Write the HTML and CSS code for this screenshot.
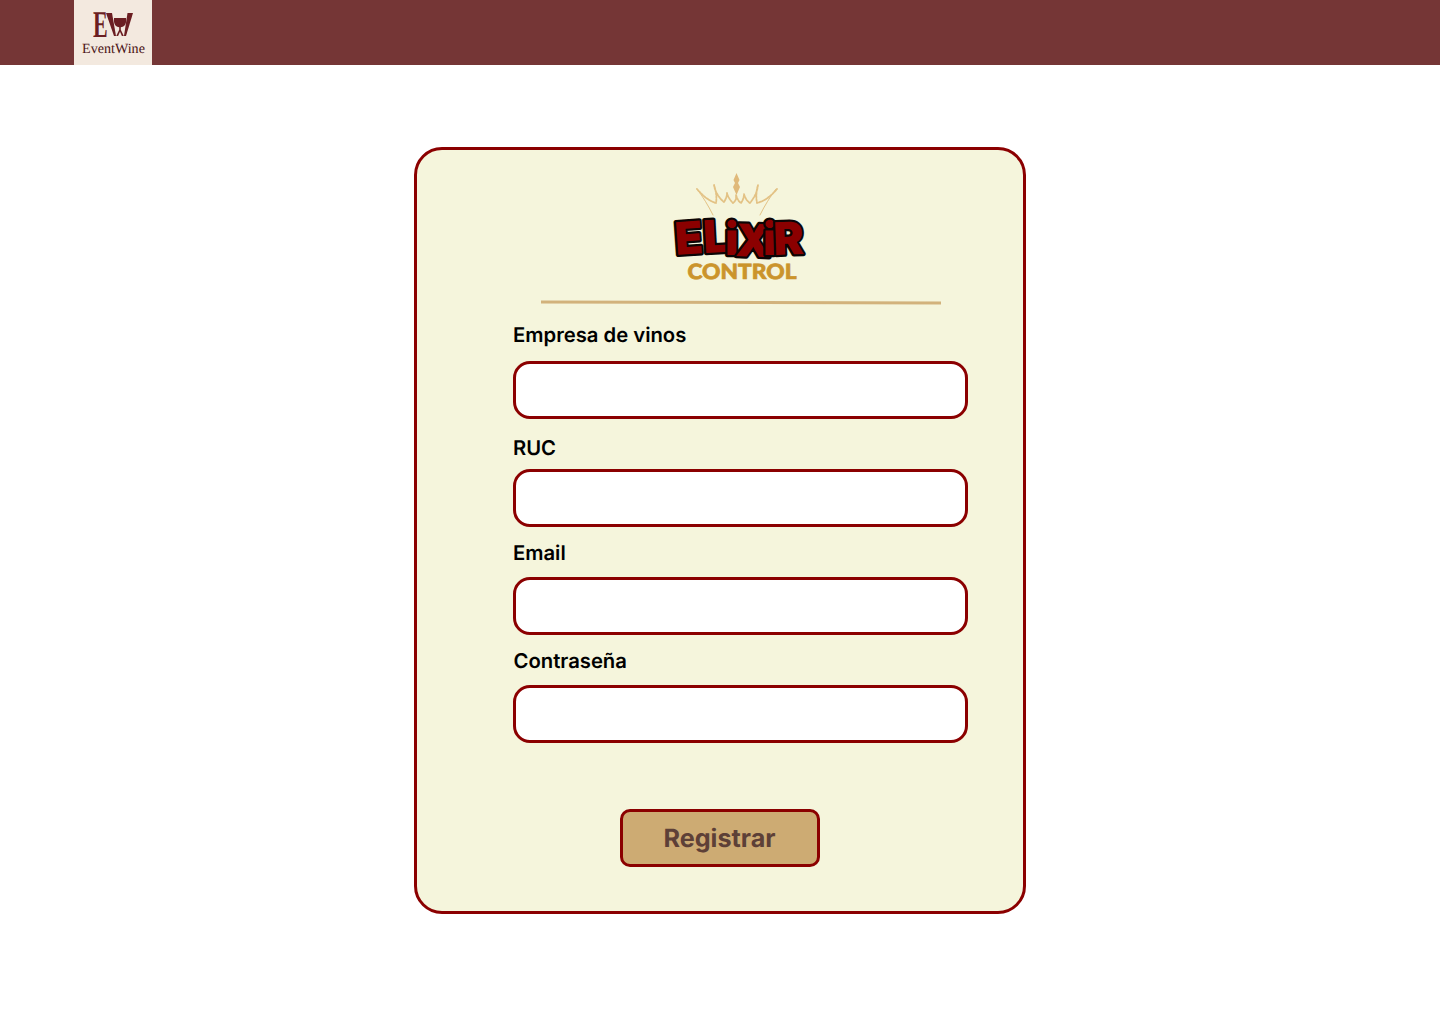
FILE: index.html
```html
<!DOCTYPE html>
<html lang="es">
<head>
<meta charset="utf-8">
<title>EventWine - Registro</title>
<link rel="stylesheet" href="styles.css">
</head>
<body>
<header class="topbar">
  <a class="brand" href="#">
    <span class="brand-mark">
      <span class="brand-e">E</span>
      <svg class="brand-glass" viewBox="0 0 27 25" width="27" height="25" aria-hidden="true">
        <path class="glass-dark" d="M0 1h6l4 23H8z"/>
        <path class="glass-dark" d="M27 1h-5.500L18 24h2z"/>
        <path class="glass-dark" d="M8 6h12c.4 3.500 0 6-1.500 7.600-1.100 1.100-2.500 1.600-3.700 1.700v2.400l3 6.300h-1.900l-1.900-4.200-1.900 4.200h-1.900l3-6.300v-2.400c-1.200-.1-2.600-.6-3.700-1.700C8.300 12 7.600 9.500 8 6z"/>
      </svg>
    </span>
    <span class="brand-name">EventWine</span>
  </a>
</header>
<main class="page">
  <form class="card">
    <div class="logo">
      <svg class="logo-art" viewBox="0 0 140 110" width="140" height="110" role="img" aria-label="Elixir Control">
        <g class="crown">
          <path class="crown-spike" d="M65.500 3l3 7-1.500 3 2 4-3.500 8-3.500-8 2-4-1.500-3z"/>
          <path class="crown-line" d="M26 19c6 8 11 16 16 26"/>
          <path class="crown-line" d="M105 19c-6 8-11 16-16 26"/>
          <path class="crown-dots" d="M26 19c6 7 12 12 19 14 1-6 0-12-2-18 1 7 5 13 10 17 2-3 3-6 3-9 1 4 3 7 6 10 4-3 3-6 3-8 1 3 2 6 5 8 2-3 3-6 3-9 1 4 3 7 6 9 4-5 7-10 8-18-2 7-2 13-1 18 8-2 14-7 20-14"/>
        </g>
        <text class="logo-elixir" x="5 33 54 64 92 103" y="85 83 85 86 85 85" rotate="-4 -3 0 2 0 -2">ELiXiR</text>
        <text class="logo-control" x="71" y="109" text-anchor="middle" textLength="109" lengthAdjust="spacingAndGlyphs">CONTROL</text>
      </svg>
      <div class="rule"></div>
    </div>
    <div class="field field-empresa">
      <label class="field-label" for="empresa">Empresa de vinos</label>
      <input class="field-input" id="empresa" type="text">
    </div>
    <div class="field field-ruc">
      <label class="field-label" for="ruc">RUC</label>
      <input class="field-input" id="ruc" type="text">
    </div>
    <div class="field field-email">
      <label class="field-label" for="email">Email</label>
      <input class="field-input" id="email" type="email">
    </div>
    <div class="field field-pass">
      <label class="field-label" for="pass">Contraseña</label>
      <input class="field-input" id="pass" type="password">
    </div>
    <button class="submit" type="button"><span class="submit-text">Registrar</span></button>
  </form>
</main>
</body>
</html>
```
FILE: styles.css
```css
* { box-sizing: border-box; }
html, body { margin: 0; padding: 0; }
body { background: #fff; font-family: Inter, "Liberation Sans", sans-serif; color: #000; text-rendering: geometricPrecision; }

.topbar { height: 65px; background: #753636; padding-left: 74px; display: flex; }
.brand { width: 78px; height: 65px; background: #f3e9df; display: flex; flex-direction: column; align-items: center; text-decoration: none; padding-top: 12px; }
.brand-mark { display: flex; align-items: flex-start; height: 30px; margin-left: 0; }
.brand-e { display: block; width: 13px; font-family: "Liberation Serif", serif; font-weight: 700; font-size: 38px; line-height: 26px; height: 25px; color: #6b1e22; transform: scaleX(.58); transform-origin: left top; }
.brand-glass { display: block; }
.glass-dark { fill: #6b1e22; }
.brand-name { font-family: "Liberation Serif", serif; font-size: 14.100px; line-height: 14px; color: #4a1215; margin-left: 1px; }

.page { display: flex; justify-content: center; padding-top: 82px; }
.card { width: 612px; height: 767px; background: #f5f5dc; border: 3px solid #8b0000; border-radius: 28px; display: flex; flex-direction: column; align-items: stretch; padding: 20px 55px 0 96px; }

.logo { display: flex; flex-direction: column; align-items: center; }
.logo-art { display: block; overflow: visible; }
.crown path { fill: none; stroke: #e3c285; stroke-linejoin: round; stroke-linecap: round; }
.crown .crown-spike { fill: #e0b97a; stroke: none; }
.crown-line { stroke-width: 1; }
.crown-dots { stroke-width: 1.800; stroke-dasharray: 2 1.200; }
.logo-elixir { font-family: Inter, sans-serif; font-weight: 900; font-size: 45px; fill: #8b0000; stroke: #0c0505; stroke-width: 4.500; stroke-linejoin: round; paint-order: stroke; }
.logo-control { font-family: Lato, Inter, sans-serif; font-weight: 900; font-size: 21px; fill: #cb942b; stroke: #cb942b; stroke-width: .7; }
.rule { width: 400px; height: 3px; background: #d2b27c; margin-top: 21px; transform: rotate(.14deg); }

.field { display: flex; flex-direction: column; }
.field-label { font-size: 20.250px; font-weight: 600; line-height: 24px; }
.field-input { width: 455px; height: 58px; background: #fff; border: 3px solid #8b0000; border-radius: 17px; outline: none; padding: 0 14px; display: block; }
.field-empresa { margin-top: 19px; }
.field-empresa .field-label { margin-bottom: 14px; }
.field-ruc { margin-top: 17px; }
.field-ruc .field-label { margin-bottom: 9px; }
.field-email { margin-top: 14px; }
.field-email .field-label { margin-bottom: 12px; }
.field-pass { margin-top: 14px; }
.field-pass .field-label { margin-bottom: 12px; margin-left: .5px; }

.submit { align-self: center; width: 200px; height: 58px; margin-top: 66px; margin-left: -41px; background: #cdab73; border: 3px solid #8b0000; border-radius: 10px; color: #5d4037; font-family: Inter, sans-serif; font-size: 25.200px; font-weight: 700; padding: 1px 1px 0 0; text-rendering: geometricPrecision; }
.submit-text { display: block; }
```
